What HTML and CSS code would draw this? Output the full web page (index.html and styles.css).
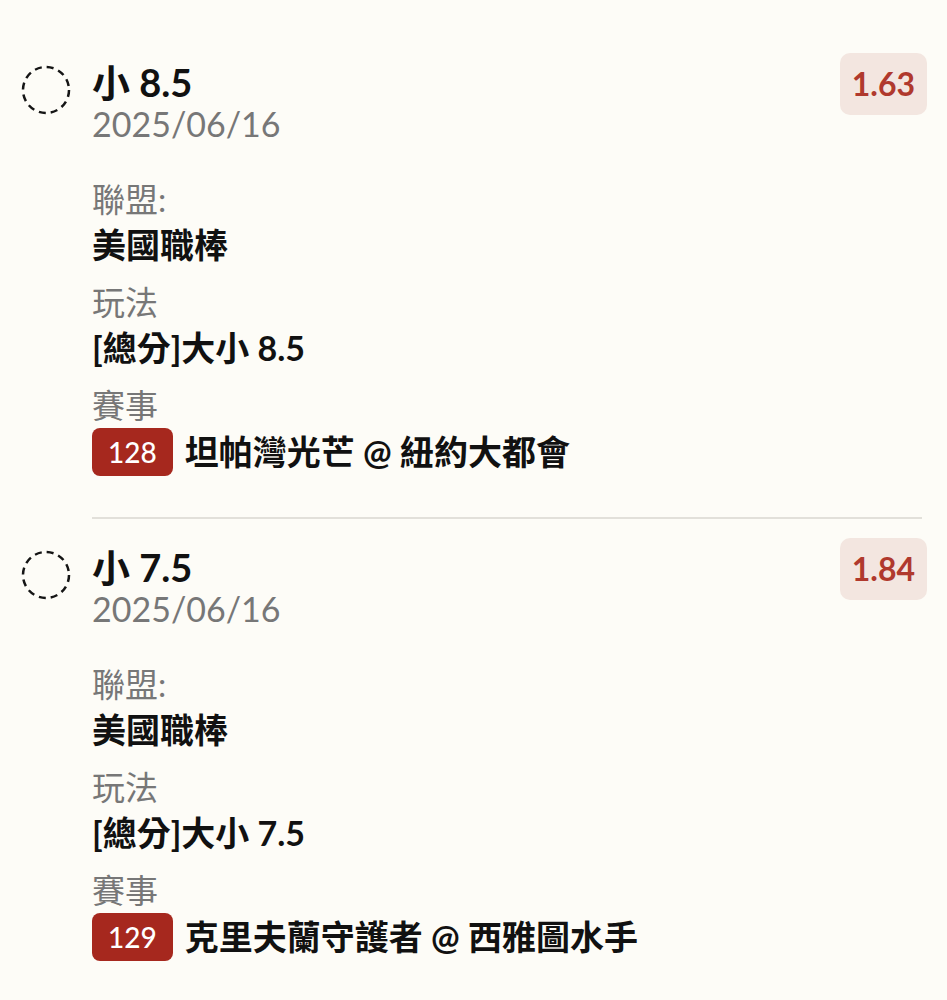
FILE: index.html
```html
<!DOCTYPE html>
<html lang="zh-Hant">
<head>
  <meta charset="UTF-8" />
  <meta name="viewport" content="width=device-width, initial-scale=1.0"/>
  <title>注單</title>
  <link rel="stylesheet" href="styles.css">
</head>
<body>

<div class="bet-list">

  <!-- 第一張注單 -->
  <div class="bet">
    <svg class="check" width="50" height="50" viewBox="0 0 50 50">
      <circle cx="25" cy="25" r="23" />
    </svg>
    <div class="bet-body">
      <div class="bet-title">小 8.5</div>
      <div class="bet-date">2025/06/16</div>
      <div class="field">
        <div class="field-label">聯盟:</div>
        <div class="field-value">美國職棒</div>
      </div>
      <div class="field">
        <div class="field-label">玩法</div>
        <div class="field-value">[總分]大小 8.5</div>
      </div>
      <div class="field">
        <div class="field-label">賽事</div>
        <div class="field-value match">
          <span class="match-no">128</span>
          <span>坦帕灣光芒 @ 紐約大都會</span>
        </div>
      </div>
    </div>
    <div class="odds">1.63</div>
  </div>

  <hr class="divider">

  <!-- 第二張注單 -->
  <div class="bet">
    <svg class="check" width="50" height="50" viewBox="0 0 50 50">
      <circle cx="25" cy="25" r="23" />
    </svg>
    <div class="bet-body">
      <div class="bet-title">小 7.5</div>
      <div class="bet-date">2025/06/16</div>
      <div class="field">
        <div class="field-label">聯盟:</div>
        <div class="field-value">美國職棒</div>
      </div>
      <div class="field">
        <div class="field-label">玩法</div>
        <div class="field-value">[總分]大小 7.5</div>
      </div>
      <div class="field">
        <div class="field-label">賽事</div>
        <div class="field-value match">
          <span class="match-no">129</span>
          <span>克里夫蘭守護者 @ 西雅圖水手</span>
        </div>
      </div>
    </div>
    <div class="odds">1.84</div>
  </div>

</div>

</body>
</html>
```

FILE: styles.css
```css
html, body {
  margin: 0;
  padding: 0;
  background: #fdfcf7;
  font-family: Lato, "Noto Sans CJK TC", sans-serif;
  color: #111;
}

.bet-list {
  padding-top: 34px;
}

.bet {
  display: flex;
  align-items: flex-start;
  padding: 19px 0 41px;
}

/* 虛線圓圈 */
.check {
  flex: none;
  margin: 12px 21px 0 21px;
}

.check circle {
  fill: none;
  stroke: #151515;
  stroke-width: 2.5;
  stroke-dasharray: 7 5.04;
}

.bet-body {
  flex: 1;
  padding-top: 8px;
}

.bet-title {
  font-size: 38px;
  font-weight: bold;
  line-height: 42px;
}

.bet-date {
  font-size: 34px;
  line-height: 42px;
  color: #777;
  margin-bottom: 31px;
}

.field + .field {
  margin-top: 11px;
}

.field-label {
  font-size: 33px;
  line-height: 46px;
  color: #777;
}

.field-value {
  font-size: 34px;
  line-height: 46px;
  font-weight: bold;
}

.match {
  display: flex;
  align-items: center;
  gap: 12px;
}

.match-no {
  background: #a6281e;
  color: #fff;
  font-size: 28px;
  font-weight: 500;
  line-height: 48px;
  padding: 0 16px;
  border-radius: 8px;
}

/* 賠率 */
.odds {
  flex: none;
  margin-right: 20px;
  background: #f3e6e0;
  color: #b0392d;
  font-size: 32px;
  font-weight: bold;
  line-height: 62px;
  padding: 0 12px;
  border-radius: 10px;
}

.divider {
  border: none;
  height: 2px;
  background: #e2e0da;
  margin: 0 25px 0 92px;
}
```
